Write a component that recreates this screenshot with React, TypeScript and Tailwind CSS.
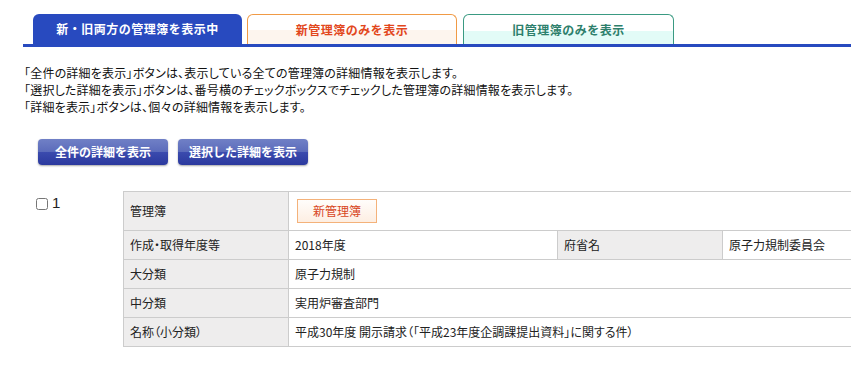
const jp = "font-['Noto_Sans_CJK_JP','Noto_Sans',sans-serif]"

function Tabs() {
  return (
    <div className="ml-[23px] mt-[14px] flex items-end border-b-[3px] border-[#284abf] pl-[10px]">
      <div className="flex h-[30px] w-[209px] items-center justify-center rounded-t-[6px] bg-[#284abf] text-[12px] font-bold tracking-[0.5px] text-white">
        新・旧両方の管理簿を表示中
      </div>
      <div className="ml-[5px] flex h-[30px] w-[210px] items-center justify-center rounded-t-[6px] border border-b-0 border-[#f09a45] bg-[linear-gradient(#ffffff_0%,#ffffff_52%,#fdf5ee_53%,#fdf5ee_100%)] text-[12px] font-bold tracking-[0.5px] text-[#e2471c]">
        新管理簿のみを表示
      </div>
      <div className="ml-[6px] flex h-[30px] w-[211px] items-center justify-center rounded-t-[6px] border border-b-0 border-[#3a9a82] bg-[linear-gradient(#ffffff_0%,#ffffff_55%,#e2fbf7_56%,#e2fbf7_100%)] text-[12px] font-bold tracking-[0.5px] text-[#2d7f6c]">
        旧管理簿のみを表示
      </div>
    </div>
  )
}

function BlueButton({ label }: { label: string }) {
  return (
    <button className="flex h-[26px] w-[130px] items-center justify-center rounded-[4px] bg-[linear-gradient(#7080c6_0%,#5c6cbb_48%,#3a4aad_52%,#2b399e_100%)] text-[12px] font-bold text-white shadow-[0_1px_2px_rgba(0,0,0,0.35)]">
      {label}
    </button>
  )
}

const th = 'bg-[#eeeded] border border-[#cccccc] px-[6px] text-left font-normal align-middle'
const td = 'bg-white border border-[#cccccc] px-[6px] align-middle'

export default function App() {
  return (
    <div className={`${jp} h-[374px] w-[851px] overflow-hidden bg-white text-[#222]`}>
      <Tabs />

      <div className="mt-[17px] pl-[24px] text-[12px] leading-[17px] text-[#111] [font-feature-settings:'palt'] tracking-[0.2px]">
        <p>「全件の詳細を表示」ボタンは、表示している全ての管理簿の詳細情報を表示します。</p>
        <p>「選択した詳細を表示」ボタンは、番号横のチェックボックスでチェックした管理簿の詳細情報を表示します。</p>
        <p>「詳細を表示」ボタンは、個々の詳細情報を表示します。</p>
      </div>

      <div className="mt-[24px] flex gap-[10px] pl-[38px]">
        <BlueButton label="全件の詳細を表示" />
        <BlueButton label="選択した詳細を表示" />
      </div>

      <div className="mt-[26px] flex">
        <div className="flex w-[123px] shrink-0 items-start pl-[36px] pt-[4px]">
          <input type="checkbox" className="mt-[3px] h-[12px] w-[12px] rounded-[3px]" />
          <span className="ml-[4px] font-['Liberation_Sans',sans-serif] text-[15px] leading-[15px]">1</span>
        </div>
        <table className="w-[764px] shrink-0 table-fixed border-collapse text-[12px] text-[#222] [font-feature-settings:'palt']">
          <colgroup>
            <col className="w-[165px]" />
            <col className="w-[269px]" />
            <col className="w-[165px]" />
            <col className="w-[165px]" />
          </colgroup>
          <tbody>
            <tr className="h-[39px]">
              <th className={th}>管理簿</th>
              <td className={td} colSpan={3}>
                <span className="ml-[2px] inline-flex h-[24px] w-[80px] items-center justify-center border border-[#f4b27a] bg-[linear-gradient(#fffdfb,#fdeee2)] text-[12px] text-[#d8461c]">
                  新管理簿
                </span>
              </td>
            </tr>
            <tr className="h-[29px]">
              <th className={th}>作成・取得年度等</th>
              <td className={td}>2018年度</td>
              <th className={th}>府省名</th>
              <td className={td}>原子力規制委員会</td>
            </tr>
            <tr className="h-[29px]">
              <th className={th}>大分類</th>
              <td className={td} colSpan={3}>原子力規制</td>
            </tr>
            <tr className="h-[29px]">
              <th className={th}>中分類</th>
              <td className={td} colSpan={3}>実用炉審査部門</td>
            </tr>
            <tr className="h-[29px]">
              <th className={th}>名称（小分類）</th>
              <td className={td} colSpan={3}>平成30年度 開示請求（「平成23年度企調課提出資料」に関する件）</td>
            </tr>
          </tbody>
        </table>
      </div>
    </div>
  )
}
